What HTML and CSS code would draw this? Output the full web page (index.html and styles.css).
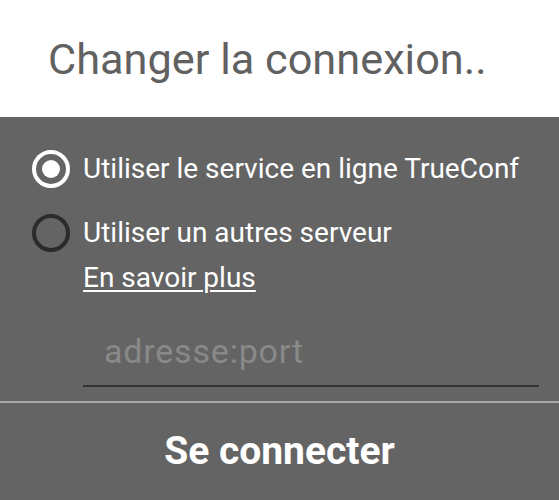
FILE: index.html
```html
<!DOCTYPE html>
<html lang="fr">
<head>
<meta charset="utf-8">
<link rel="stylesheet" href="styles.css">
</head>
<body>
<div class="dialog">
  <div class="header">Changer la connexion..</div>
  <div class="content">
    <div class="option">
      <span class="radio checked"><span class="dot"></span></span>
      <span class="label">Utiliser le service en ligne TrueConf</span>
    </div>
    <div class="option second">
      <span class="radio"></span>
      <span class="label">Utiliser un autres serveur</span>
    </div>
    <div class="sub">
      <a class="link" href="#">En savoir plus</a>
      <div class="input"><span class="placeholder">adresse:port</span></div>
    </div>
  </div>
  <div class="divider"></div>
  <div class="button">Se connecter</div>
</div>
</body>
</html>
```
FILE: styles.css
```css
html, body {
  margin: 0;
  padding: 0;
}
body {
  background: #646464;
  font-family: Roboto, "Noto Sans", sans-serif;
  width: 559px;
  height: 500px;
  overflow: hidden;
}
.dialog {
  display: flex;
  flex-direction: column;
  height: 500px;
}
.header {
  background: #ffffff;
  height: 117px;
  flex: none;
  box-sizing: border-box;
  padding-left: 48px;
  padding-top: 35px;
  font-size: 43.3px;
  line-height: 50px;
  color: #616161;
}
.content {
  padding: 33px 20px 0 32px;
  display: flex;
  flex-direction: column;
}
.option {
  display: flex;
  align-items: center;
  gap: 13px;
  height: 38px;
}
.option.second {
  margin-top: 25.5px;
}
.radio {
  width: 38px;
  height: 38px;
  box-sizing: border-box;
  border-radius: 50%;
  border: 4px solid #2b2b2b;
  display: flex;
  align-items: center;
  justify-content: center;
  flex: none;
}
.radio.checked {
  border-color: #ffffff;
}
.dot {
  width: 18px;
  height: 18px;
  border-radius: 50%;
  background: #ffffff;
}
.label {
  font-size: 28px;
  line-height: 32px;
  color: #ffffff;
  white-space: nowrap;
}
.sub {
  padding-left: 51px;
  display: flex;
  flex-direction: column;
  align-items: flex-start;
}
.link {
  margin-top: 10px;
  font-size: 28px;
  line-height: 32px;
  color: #ffffff;
  text-decoration: underline;
  text-underline-offset: 3px;
  text-decoration-thickness: 2px;
}
.input {
  align-self: stretch;
  margin-top: 38px;
  height: 55px;
  box-sizing: border-box;
  border-bottom: 2px solid #333333;
  padding-left: 21px;
}
.placeholder {
  font-size: 34px;
  line-height: 38px;
  letter-spacing: 0.8px;
  color: #898989;
  white-space: nowrap;
}
.divider {
  flex: none;
  margin-top: 14px;
  height: 2px;
  background: #a9a9a9;
}
.button {
  flex: 1;
  display: flex;
  align-items: center;
  justify-content: center;
  font-size: 39px;
  font-weight: bold;
  color: #ffffff;
}
```
